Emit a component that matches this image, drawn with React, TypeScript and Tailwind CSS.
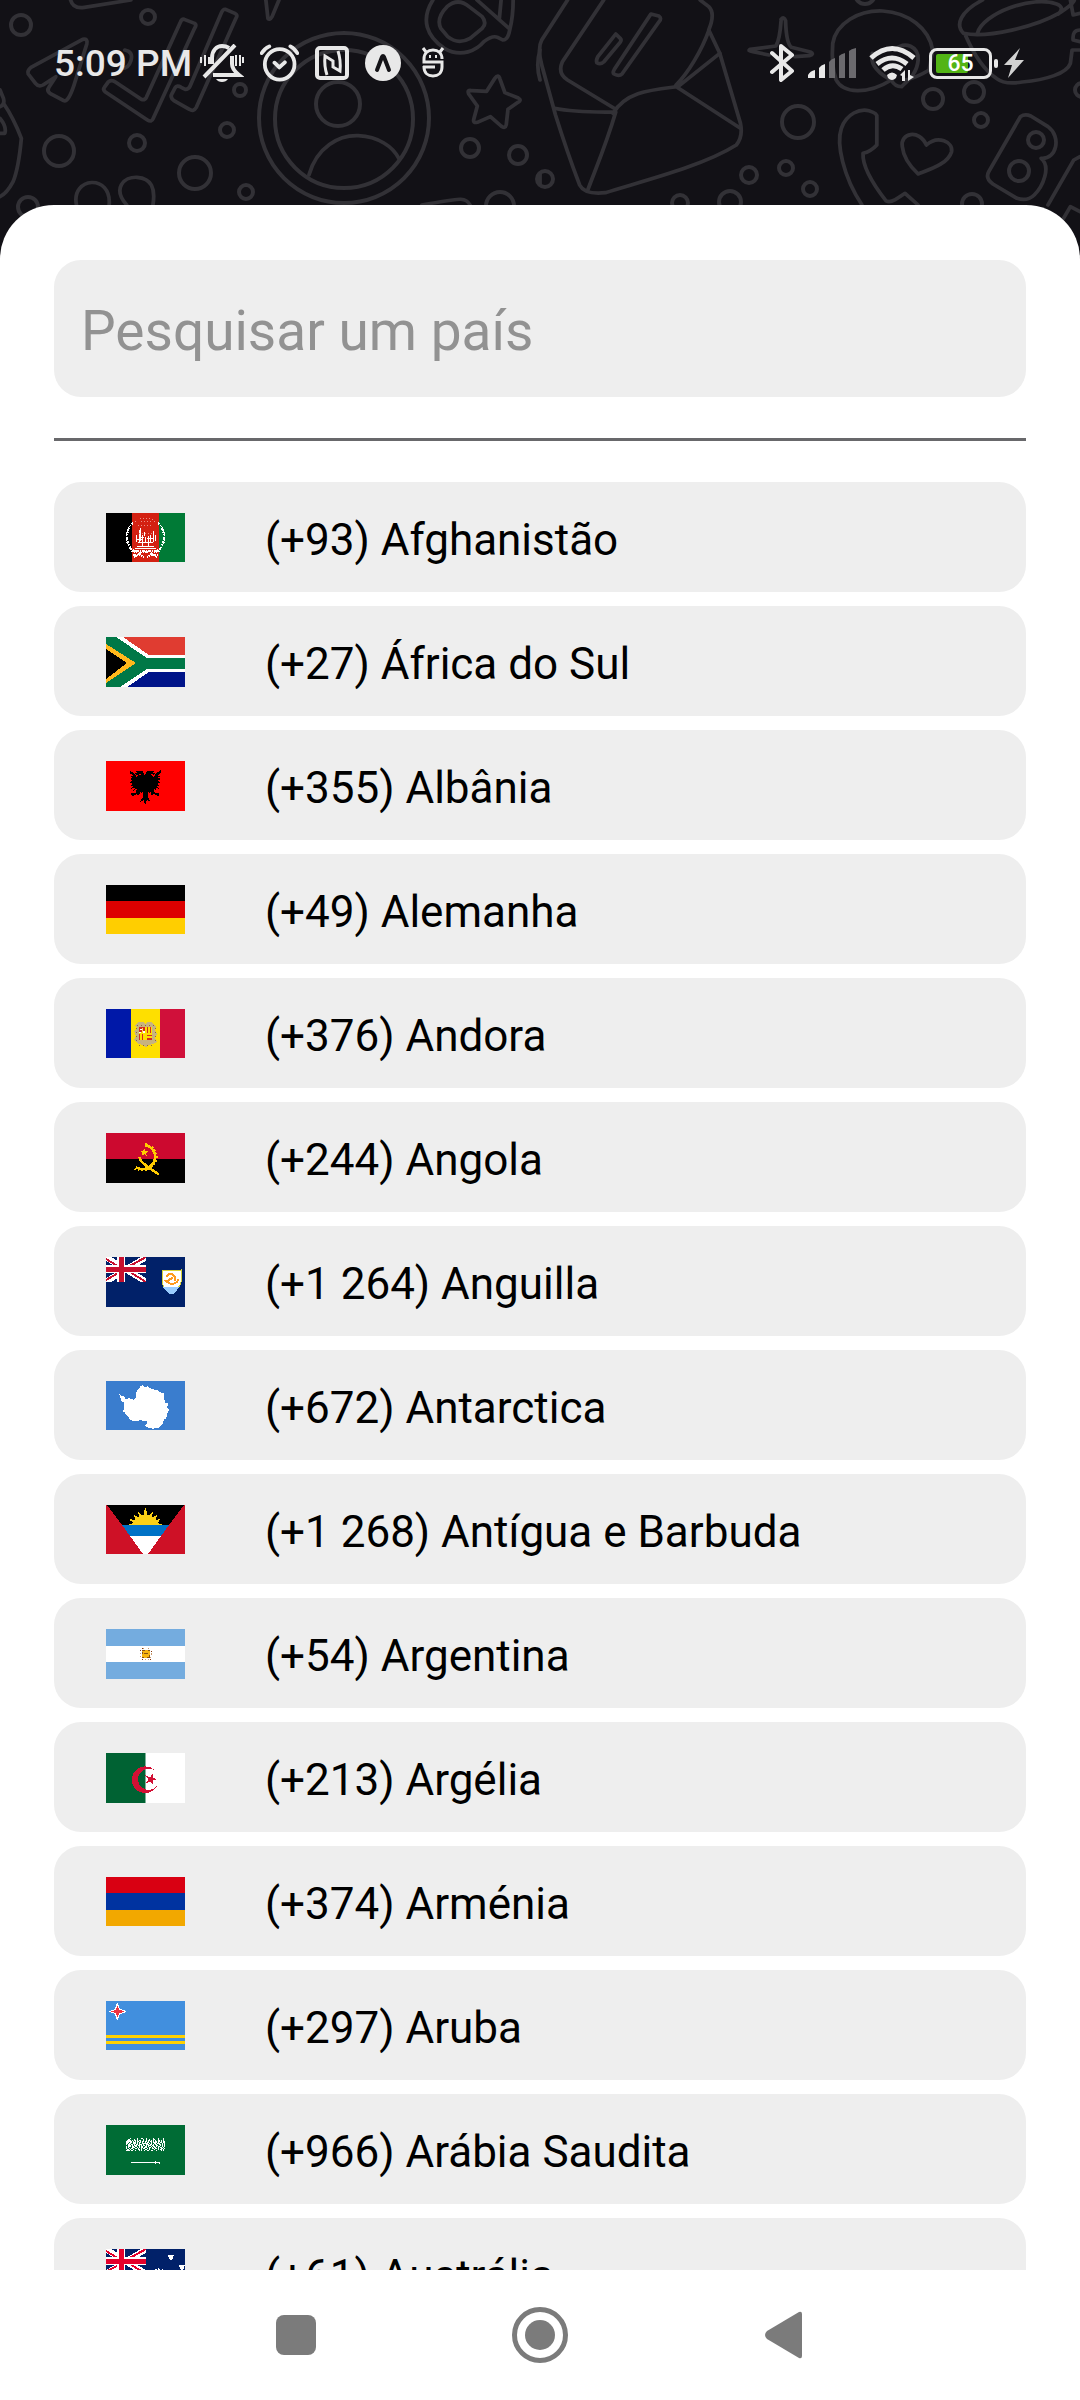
import type { ReactNode } from 'react';

type Country = { code: string; name: string; flag: ReactNode };

const DOODLE_CIRCLES: [number, number, number][] = [
  [21, 25, 10], [148, 17, 7], [240, 90, 6], [227, 130, 7], [137, 143, 8], [59, 151, 15], [195, 173, 16],
  [246, 192, 7], [28, 207, 10], [344, 118, 85], [344, 119, 69], [338, 104, 22], [470, 148, 9], [518, 155, 9],
  [500, 206, 14], [798, 122, 16], [749, 175, 8], [786, 168, 7], [810, 189, 7], [545, 179, 8], [680, 203, 8],
  [730, 202, 11], [933, 99, 10], [974, 92, 10], [981, 120, 7], [1036, 140, 8], [1019, 171, 10], [972, 204, 10],
  [865, -6, 10], [1082, 90, 7],
];

function Doodles() {
  return (
    <svg
      aria-hidden="true"
      className="absolute inset-x-0 top-0 h-[260px] w-full"
      viewBox="0 0 1080 260"
      preserveAspectRatio="xMidYMin slice"
      fill="none"
      stroke="#323136"
      strokeWidth="4"
      strokeLinejoin="round"
      strokeLinecap="round"
    >
      {DOODLE_CIRCLES.map(([cx, cy, r], i) => (
        <circle key={i} cx={cx} cy={cy} r={r} />
      ))}
      <g transform="scale(.3444 .3333)" strokeWidth="11">
        <path d="M205 0C210 20 225 25 245 22L380 0M772 0L778 55Q783 62 790 50L810 0" />
        <path d="M240 118Q256 115 252 132L215 255Q198 308 185 302L145 280Q135 272 142 262L162 230L125 255Q112 262 103 250L82 222Q78 212 90 202Z" />
        <path d="M535 58L565 70Q572 75 565 85L445 355Q440 368 428 360L305 275Q298 268 303 262L315 245Q325 238 335 246L410 298Q420 302 425 292L524 66Q528 56 535 58Z" />
        <path d="M655 28L682 40Q692 45 685 55L570 322Q562 336 550 328L505 302Q492 292 500 280L508 264Q514 254 526 262L538 268Q548 268 552 258L643 38Q648 26 655 28Z" />
        <path d="M362 150Q388 155 380 182Q372 208 350 205M0 320Q15 315 10 295L0 270M10 310C30 340 45 370 62 415C58 460 52 510 38 545Q20 580 0 590M0 355Q20 380 14 400L0 400" />
        <path d="M222 615C205 530 325 520 317 615M368 615C325 565 360 530 398 532C440 535 452 565 444 615M1225 615C1320 600 1350 585 1365 615M1568 150Q1555 195 1568 240M1568 520V555" />
        <path d="M897 525C920 440 985 405 1040 407C1100 410 1140 440 1158 475" />
        <path d="M1437 235Q1447 220 1452 238L1466 278L1505 294Q1516 300 1504 307L1475 328L1470 374Q1467 388 1455 378L1424 350L1386 367Q1372 370 1376 356L1386 318L1361 282Q1355 268 1371 272L1413 274Z" />
        <path d="M1257 0C1220 60 1240 110 1290 145C1340 175 1385 150 1405 125Q1430 105 1445 112L1460 120Q1475 120 1480 90Q1490 50 1490 0M1385 0L1478 85M1455 0L1450 55" />
        <path d="M1298 20Q1330 -8 1362 20L1400 50Q1415 70 1400 85L1365 115Q1330 135 1300 110L1280 85Q1265 55 1298 20Z" />
      </g>
      <g transform="translate(540) scale(.3444 .3333)" strokeWidth="11">
        <path d="M80 0L5 120Q-8 145 5 195L45 345Q80 460 115 555Q130 585 190 578C290 545 470 500 570 435Q590 410 582 370L522 160L490 90Q510 40 490 20L465 0" />
        <path d="M185 0L65 185Q50 220 80 240L220 328M490 92C470 150 430 220 395 255M522 160L398 262L582 385M42 325Q100 338 220 336C190 440 160 510 138 572M212 340C250 275 320 270 398 260" />
        <path d="M322 42L345 48Q355 55 345 66L238 222Q230 230 215 222Q210 218 216 208ZM220 102L233 115Q238 120 232 128L185 186Q175 195 165 188Q162 182 168 170Z" />
        <path d="M700 58Q708 48 713 62Q715 130 730 142L785 156Q798 162 782 167L740 170M700 62Q696 120 685 138L610 148Q602 153 618 155L665 165" />
        <path d="M1020 240C950 285 880 280 860 240Q845 200 850 130C860 70 925 30 995 33C1070 38 1130 85 1140 150L1130 210Q1090 235 1060 240M1030 150C1060 120 1100 140 1098 180C1095 220 1070 240 1050 260Q1030 260 1020 240M965 160Q955 200 1010 235" />
        <path d="M1285 0C1220 35 1205 75 1230 100C1300 115 1440 80 1510 38Q1560 5 1550 -5M1270 100C1285 40 1430 -15 1500 12Q1525 22 1505 42M1235 105Q1275 200 1325 235Q1350 255 1400 246C1470 240 1530 220 1540 190L1545 150H1568M1540 0L1548 45L1568 40M1568 90Q1545 90 1548 120L1568 125" />
        <path d="M935 615C880 530 860 430 875 385C890 340 930 325 955 332Q980 340 978 350V435Q960 455 938 460Q935 510 1005 603Q1015 608 1030 600L1060 580L1098 615" />
        <path d="M1052 440C1045 400 1100 385 1122 435C1155 405 1200 425 1195 455C1185 490 1140 505 1098 522C1070 495 1055 470 1052 440Z" />
        <path d="M1395 350Q1408 340 1425 348L1475 380C1515 410 1500 480 1455 475C1485 500 1460 560 1435 585Q1415 605 1385 595L1315 552Q1292 535 1303 515ZM1475 615L1550 480L1568 470M1520 655L1540 620L1568 635" />
      </g>
    </svg>
  );
}

function StatusBar() {
  return (
    <div className="relative flex h-[126px] items-center justify-between pl-[54px] pr-14 text-[#e8e8e8]">
      <div className="flex items-center gap-4">
        <time className="-mr-2 text-[37px] font-medium leading-none">5:09 PM</time>
        <svg role="img" aria-label="Silencioso" className="h-[38px] w-11" viewBox="0 0 44 38" fill="none" stroke="currentColor" strokeWidth="4">
          <path d="M12 20V14C12 6 17 2 22 2Q26 2 29 4M4 33L35 1M13 31H39C34 27 32 24 32 20V12" />
          <path strokeWidth="2" d="M1 13V19M5 11V22M9 13V20M36 11V22M40 11V22M43 13V19" />
          <path stroke="none" fill="currentColor" d="M16 35H28Q26 38 22 38T16 35Z" />
        </svg>
        <svg role="img" aria-label="Alarme" className="h-[38px] w-[39px]" viewBox="755 132 113 112" preserveAspectRatio="none" fill="none" stroke="currentColor" strokeWidth="11" strokeLinecap="round" strokeLinejoin="round">
          <ellipse cx="812" cy="192" rx="43" ry="45" />
          <path d="M760 159Q768 145 782 139M863 159Q855 145 843 139M797 187L811 201L827 186" />
        </svg>
        <svg role="img" aria-label="NFC" className="h-[34px] w-[34px]" viewBox="0 0 34 34" fill="none" stroke="currentColor" strokeWidth="4">
          <rect x="2" y="2" width="30" height="30" rx="3" />
          <path strokeWidth="3" d="M12 29Q9 20 10 10L18 15V21L25 25Q26 14 23 5" />
        </svg>
        <svg role="img" aria-label="Expo" className="h-9 w-9" viewBox="0 0 36 36">
          <circle cx="18" cy="18" r="18" fill="currentColor" />
          <path d="M12 25L17 12Q18 10 19 12L24 25" fill="none" stroke="#141317" strokeWidth="4" strokeLinecap="round" strokeLinejoin="round" />
        </svg>
        <svg role="img" aria-label="Depuração" className="h-8 w-8" viewBox="0 0 32 32" fill="none" stroke="currentColor" strokeWidth="2">
          <path strokeWidth="3" d="M25 12C25 6 21 3 16 3S7 6 7 12V15H25V20C25 26 21 29 16 29S7 26 7 20V19M6 20H18M9 5L6 1M23 5L26 1" />
          <path fill="currentColor" stroke="none" d="M12 8h2v3h-2zM18 8h2v3h-2z" />
        </svg>
      </div>
      <div className="flex items-center gap-[13px]">
        <svg role="img" aria-label="Bluetooth" className="h-10 w-[25px]" viewBox="0 0 25 40" fill="none" stroke="currentColor" strokeWidth="4" strokeLinejoin="round" strokeLinecap="round">
          <path d="M2 10L22 28L11 37V3L22 12L2 29" />
        </svg>
        <svg role="img" aria-label="Sinal" className="h-[30px] w-12" viewBox="0 0 48 30" fill="currentColor">
          <path d="M0 30V27Q2 23 7 22V30ZM11 30V20Q13 17 17 16V30Z" />
          <path fill="#6b6a6e" d="M21 30V14Q23 11 27 10V30ZM31 30V8Q33 6 37 5V30ZM41 30V3Q43 1 48 0V30Z" />
        </svg>
        <svg role="img" aria-label="Wi-Fi" className="h-9 w-[47px]" viewBox="0 0 47 36" fill="none" stroke="currentColor" strokeWidth="5">
          <path d="M2 13Q23 -6 45 13M8 19Q23 7 38 19M14 25Q23 17 33 24" />
          <path fill="currentColor" stroke="none" d="M18 30Q23 25 28 30L27 33Q23 37 19 33ZM31 30L36 25V36H33V31ZM39 25H41V30L45 32L39 36Z" />
        </svg>
        <div className="flex items-center gap-[6px]">
          <div className="flex items-center gap-0.5" aria-label="Bateria 65%">
            <div className="relative flex h-[31px] w-[63px] items-center justify-center rounded-lg border-3 border-current p-1">
              <span className="absolute left-1 top-[3px] h-[19px] w-8 rounded-xs bg-[#52b415]" />
              <span className="relative text-[23px] font-medium leading-none text-white">65</span>
            </div>
            <span className="h-[9px] w-1 rounded-xs bg-current" />
          </div>
          <svg role="img" aria-label="Carregando" className="h-[30px] w-5" viewBox="0 0 20 30" fill="#d2d2d2">
            <path d="M16 0L0 17H8L4 30L20 12H11Z" />
          </svg>
        </div>
      </div>
    </div>
  );
}

function UnionJack({ red }: { red: string }) {
  return (
    <svg x="0" y="0" width="40" height="25" viewBox="0 0 40 25" preserveAspectRatio="none">
      <path stroke="#fff" strokeWidth="6" d="M-2 -1L42 26M42 -1L-2 26" />
      <path stroke={red} strokeWidth="2" d="M0 2L15 11M40 0L22 10M40 25L24 15M0 23L16 14" />
      <path stroke="#fff" strokeWidth="8" d="M15 0V25M0 12H40" />
      <path stroke={red} strokeWidth="5" d="M15 0V25M0 12.5H40" />
    </svg>
  );
}

const SCRIPT_ROWS = [
  '....#......#...##...#......#....#....#.',
  '..##....#..#.....#..#..#...##...#....#.',
  '.####.#.##.#.##..#..#.##.#.#.#..##.#.#.',
  '######.#.#.##.#.##.##.#.##.#.##.##.#.##',
  '###.##.###.#.##.#..#.##..#.####.#.##.##',
  '##.##..###.#.#..######.#.#..##.###..#.#',
  '#.##.##.#.##.###.#..###.##.#.##..##.#.#',
  '..###.#.###.##.#.##.#.###.##..##..#.#.#',
  '#.###.##.##..#.##..##.#..#.##.#.##..#.#',
  '#.#...###..#.#.##.###..##.#.##..#.##.#.',
  '#..#.##..##.#..#.##..#.#..##.##.#..##.#',
  '.##.#..#....##.#...##..#....#...#.##.#.',
  '####.##..#...#.#..#..##..##...#....#.#.',
];

function Flag({ children }: { children: ReactNode }) {
  return (
    <svg aria-hidden="true" className="h-[50px] w-[79px] shrink-0" viewBox="0 0 79 50" shapeRendering="crispEdges" fill="none">
      {children}
    </svg>
  );
}

const southernStar = 'M0 -4L1 -1L4 -2L2 1L3 4L0 2L-3 4L-2 1L-4 -2L-1 -1Z';

const COUNTRIES: Country[] = [
  {
    code: '93',
    name: 'Afghanistão',
    flag: (
      <>
        <path fill="#000" d="M0 0H26V49H0Z" />
        <path fill="#d32011" d="M26 0H53V49H26Z" />
        <path fill="#007a36" d="M53 0H79V49H53Z" />
        <g stroke="#fff">
          <path strokeWidth="2" strokeDasharray="2 1 1 2 3 1" d="M27 10C19 17 19 30 28 40M52 10C60 17 60 30 51 40" />
          <path strokeWidth="1" strokeDasharray="1 1 2 1" d="M24 13C17 22 20 34 27 37M55 13C62 22 59 34 52 37" />
          <path strokeWidth="2" strokeDasharray="3 1 1 1" d="M27 37L38 44M52 37L41 44M28 44L36 39L43 39L51 44M30 38H49M27 42H34M45 42H52" />
          <path strokeWidth="1" d="M31 33H48M29 35H50M34 15V28M33 17V30M36 22V33M39 24V30M42 23V33M44 22V30M47 18V29M30 22V29M49 22V28M34 24H38M41 25H47M30 26H36M32 29H47M38 19V23" />
          <path strokeWidth="1" strokeDasharray="1 2" stroke="#e98d84" d="M29 9Q39 1 50 9M32 12H47M35 8H45M33 20H48" />
        </g>
      </>
    ),
  },
  {
    code: '27',
    name: 'África do Sul',
    flag: (
      <>
        <path fill="#007847" d="M0 0H79V50H0Z" />
        <path fill="#fff" d="M10 0H79V21H41ZM14 50H79V32H41Z" />
        <path fill="#e03c31" d="M17 0H79V18H43Z" />
        <path fill="#001489" d="M21 50H79V35H43Z" />
        <path fill="#ffb81c" d="M0 7L30 26L0 46Z" />
        <path fill="#000" d="M0 12L21 26L0 42Z" />
      </>
    ),
  },
  {
    code: '355',
    name: 'Albânia',
    flag: (
      <>
        <path fill="#f00" d="M0 0H79V50H0Z" />
        <g fill="#000" transform="scale(.3333) translate(-48 -816)">
          <path d="M134 845H157L164 860L172 845H195L187 852L196 854L186 860L190 864L200 852L212 844V852L202 860H212L204 866L213 870L204 874L213 882L202 884L211 892H200L208 899L196 897L203 906L190 899L195 912L210 914L204 922L194 915L184 918L182 907L178 913L174 908V925L180 936L170 934L166 948L161 934L151 938L158 925V908L154 914L150 907L148 918L138 916L128 922L119 914L136 912L141 899L128 906L135 897L122 899L130 892H120L129 884L119 882L127 874L119 870L127 866L119 860H129L119 852V844L131 852L140 864L144 860L134 854L143 852Z" />
        </g>
        <path fill="#f00" d="M33 13h2v1h-2zM45 13h2v1h-2z" />
      </>
    ),
  },
  {
    code: '49',
    name: 'Alemanha',
    flag: (
      <>
        <path fill="#000" d="M0 0H79V16H0Z" />
        <path fill="#d00" d="M0 16H79V33H0Z" />
        <path fill="#ffce00" d="M0 33H79V49H0Z" />
      </>
    ),
  },
  {
    code: '376',
    name: 'Andora',
    flag: (
      <>
        <path fill="#0018a8" d="M0 0H25V49H0Z" />
        <path fill="#fedf00" d="M25 0H54V49H25Z" />
        <path fill="#d0103a" d="M54 0H79V49H54Z" />
        <path fill="#c7b37f" d="M33 13H37L39 15L42 13H45L47 15L50 17L49 21L51 25L49 29L51 33L47 35L42 36L40 38L36 36L31 34L28 31L30 27L28 22L31 19L29 16Z" />
        <path stroke="#8a6a42" strokeWidth="1" strokeDasharray="1 3" d="M31 16H49M30 19V34M49 19V33M33 36H46" />
        <path fill="#fedf00" d="M33 18H46V31H33Z" />
        <path fill="#d52b1e" d="M33 18H39V23H33ZM41 18h1v6h-1zM44 18h1v6h-1zM33 25h1v6h-1zM36 25h1v6h-1zM41 26h5v1h-5zM41 29h5v2h-5z" />
        <path fill="#fff" d="M34 20h2v1h-2zM37 22h2v2h-2zM33 23h2v1h-2z" />
        <path fill="#ffe34d" d="M36 19h1v4h-1z" />
      </>
    ),
  },
  {
    code: '244',
    name: 'Angola',
    flag: (
      <>
        <path fill="#cc092f" d="M0 0H79V26H0Z" />
        <path fill="#000" d="M0 26H79V50H0Z" />
        <g transform="scale(.3333) translate(-48 -819)" stroke="#ffcb00">
          <path strokeWidth="8" d="M166 855C188 862 198 878 195 897C186 926 162 934 137 922" />
          <path strokeWidth="4" strokeDasharray="5 6" d="M166 851C192 858 204 878 200 898C190 930 160 940 134 927" />
          <path strokeWidth="7" d="M148 892C151 910 180 924 206 943" />
          <path stroke="none" fill="#ffcb00" d="M163 865L167 873L175 874L168 879L171 888L163 882L155 888L158 879L152 874L160 873Z" />
        </g>
      </>
    ),
  },
  {
    code: '1 264',
    name: 'Anguilla',
    flag: (
      <>
        <path fill="#012169" d="M0 0H79V50H0Z" />
        <UnionJack red="#c8102e" />
        <path fill="#fff" stroke="#d7d23a" d="M56 13Q65 15 75 13V25Q74 31 65 37Q57 31 56 25Z" />
        <path fill="#9cf" d="M57 30H73Q70 35 67 37H64Q59 34 57 30Z" />
        <path stroke="#ff9a1f" strokeWidth="2" d="M61 20Q60 17 66 17L69 20V24M72 22Q72 26 66 27L62 26M59 23Q61 27 64 22L67 21" />
      </>
    ),
  },
  {
    code: '672',
    name: 'Antarctica',
    flag: (
      <>
        <path fill="#3a7dce" d="M0 0H79V49H0Z" />
        <path
          fill="#fff"
          transform="scale(.3333) translate(-48 -420)"
          d="M87 459L94 465L102 466L106 474L118 472L132 476L138 470L140 449L148 443L152 435L158 433L163 438L172 436L178 442L188 443L196 448L203 447L208 454L222 456L224 485L234 487L232 499L237 508L231 517L229 533L222 536L217 550L206 560L188 563L180 560L167 559L166 552L172 548V541H162L154 537L138 540L122 538L115 528L107 520L105 513L99 512L102 504L101 492L104 486L95 480L91 470Z"
        />
      </>
    ),
  },
  {
    code: '1 268',
    name: 'Antígua e Barbuda',
    flag: (
      <>
        <path fill="#ce1126" d="M0 0H79V49H0Z" />
        <path fill="#000" d="M1 0H78L63 20H16Z" />
        <path fill="#fcd116" transform="scale(.3333) translate(-48 -792)" d="M116 852V849H125L130 846L119 837V833L134 838L136 834L129 820L144 829L147 826L144 810L156 823L161 822L165 800H168L172 822L177 823L189 810L186 826L189 829L204 820L197 834L199 838L213 832L203 845L208 849L216 850V852Z" />
        <path fill="#0072c6" d="M16 20H63L55 31H24Z" />
        <path fill="#fff" d="M24 31H55L42 49H37Z" />
      </>
    ),
  },
  {
    code: '54',
    name: 'Argentina',
    flag: (
      <>
        <path fill="#74acdf" d="M0 0H79V50H0Z" />
        <path fill="#fff" d="M0 17H79V33H0Z" />
        <circle cx="40" cy="25" r="6" stroke="#c99a6c" strokeDasharray="1 2" />
        <path fill="#f6b40e" d="M36 21H44V29H36Z" />
        <path fill="#85500f" d="M36 21h3v1h-3zM42 21h2v1h-2zM36 28h2v1h-2zM41 28h3v1h-3zM38 24h4v1h-4zM36 23h1v2h-1zM43 26h1v2h-1z" />
        <path fill="#85340a" d="M34 21h1v1h-1zM36 19h1v1h-1zM45 22h1v1h-1zM36 30h1v1h-1zM44 30h1v1h-1z" />
      </>
    ),
  },
  {
    code: '213',
    name: 'Argélia',
    flag: (
      <>
        <path fill="#006233" d="M0 0H39V50H0Z" />
        <path fill="#fff" d="M39 0H79V50H39Z" />
        <path fill="#7fb199" d="M39 0H40V50H39Z" />
        <g fill="#d21034" transform="scale(.3333) translate(-48 -426)">
          <path d="M195 479A40 40 0 1 0 201 525A32 32 0 1 1 195 479Z" />
          <path d="M188 488V500L201 505L189 509V522L181 512L168 516L175 505L166 493L180 499Z" />
        </g>
      </>
    ),
  },
  {
    code: '374',
    name: 'Arménia',
    flag: (
      <>
        <path fill="#d90012" d="M0 0H79V16H0Z" />
        <path fill="#0033a0" d="M0 16H79V33H0Z" />
        <path fill="#f2a800" d="M0 33H79V49H0Z" />
      </>
    ),
  },
  {
    code: '297',
    name: 'Aruba',
    flag: (
      <>
        <path fill="#418fde" d="M0 0H79V49H0Z" />
        <path fill="#ffd100" d="M0 34H79V37H0ZM0 40H79V43H0Z" />
        <path fill="#fff" d="M11 2H12L14 8L20 10V11L14 13L12 19H11L9 13L3 11V10L9 8Z" />
        <path fill="#ef3340" d="M11 5H12L13 9L18 10V11L13 12L12 16H11L10 12L5 11V10L10 9Z" />
      </>
    ),
  },
  {
    code: '966',
    name: 'Arábia Saudita',
    flag: (
      <>
        <path fill="#006c35" d="M0 0H79V50H0Z" />
        {SCRIPT_ROWS.map((row, y) =>
          [...row].map((dot, x) => (dot === '#' ? <rect key={`${x}-${y}`} x={20 + x} y={13 + y} width="1" height="1" fill="#fff" /> : null)),
        )}
        <path fill="#fff" d="M25 37H54V39H53V38H50V39H49V38H25ZM49 36H50V37H49Z" />
      </>
    ),
  },
  {
    code: '61',
    name: 'Austrália',
    flag: (
      <>
        <path fill="#012169" d="M0 0H79V50H0Z" />
        <UnionJack red="#e4002b" />
        <g fill="#fff">
          <path transform="translate(65 8)" d="M-3 -2H3L2 1L1 3H-1L-2 1Z" />
          <path transform="translate(76 18)" d="M-3 -2H3L2 1L1 3H-1L-2 1Z" />
          <path transform="translate(53 22)" d={southernStar} />
          <path transform="translate(65 42)" d={southernStar} />
        </g>
      </>
    ),
  },
];

export default function App() {
  return (
    <div
      className="relative flex h-screen flex-col overflow-hidden bg-[#121116]"
      style={{ fontFamily: 'Roboto, "Liberation Sans", sans-serif' }}
    >
      <Doodles />
      <header className="h-[205px] shrink-0">
        <StatusBar />
      </header>

      <main className="relative flex min-h-0 flex-1 flex-col rounded-t-[54px] bg-white px-[54px] pt-[55px]">
        <input
          type="search"
          aria-label="Pesquisar um país"
          placeholder="Pesquisar um país"
          className="h-[137px] w-full shrink-0 rounded-[27px] bg-[#eee] px-[27px] pt-1 text-[55px] text-black outline-none placeholder:text-[#929292] placeholder:opacity-100"
        />
        <hr className="mt-[41px] mb-[41px] shrink-0 border-t-3 border-[#68686b]" />
        <ul className="flex min-h-0 flex-1 flex-col gap-[14px] overflow-hidden">
          {COUNTRIES.map(({ code, name, flag }) => (
            <li key={name} className="shrink-0">
              <button type="button" className="flex h-[110px] w-full items-center gap-20 rounded-[27px] bg-[#eee] pt-0.5 pl-[52px] text-left">
                <Flag>{flag}</Flag>
                <span className="pt-1 text-[44px] leading-none text-black">{`(+${code}) ${name}`}</span>
              </button>
            </li>
          ))}
        </ul>
      </main>

      <nav aria-label="Navegação do sistema" className="relative flex h-[130px] shrink-0 items-center justify-center gap-[188px] bg-white text-[#7b7b7b]">
        <button type="button" aria-label="Recentes" className="flex w-14 justify-center">
          <span className="size-10 rounded-lg bg-current" />
        </button>
        <button type="button" aria-label="Início" className="flex size-14 items-center justify-center rounded-full border-5 border-current">
          <span className="size-[30px] rounded-full bg-current" />
        </button>
        <button type="button" aria-label="Voltar" className="flex w-14 justify-center">
          <svg className="h-12 w-[38px]" viewBox="0 0 38 48" fill="currentColor">
            <path d="M2 20L34 1Q37 0 37 3V45Q37 48 34 47L2 28Q-2 24 2 20Z" />
          </svg>
        </button>
      </nav>
    </div>
  );
}
